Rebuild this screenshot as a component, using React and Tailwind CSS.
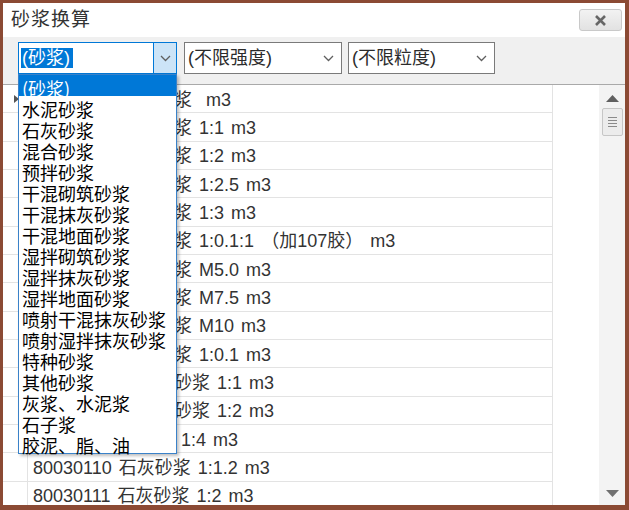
import React from 'react';

const rows = [
    '80030097 水泥砂浆  m3',
    '80030098 水泥砂浆 1:1 m3',
    '80030099 水泥砂浆 1:2 m3',
    '80030100 水泥砂浆 1:2.5 m3',
    '80030101 水泥砂浆 1:3 m3',
    '80030102 素水泥浆 1:0.1:1 （加107胶） m3',
    '80030103 混合砂浆 M5.0 m3',
    '80030104 混合砂浆 M7.5 m3',
    '80030105 混合砂浆 M10 m3',
    '80030106 石灰膏浆 1:0.1 m3',
    '80030107 水泥灰砂浆 1:1 m3',
    '80030108 水泥灰砂浆 1:2 m3',
    '80030109 石灰浆 1:4 m3',
    '80030110 石灰砂浆 1:1.2 m3',
    '80030111 石灰砂浆 1:2 m3',
];

const tipos = [
    '(砂浆)', '水泥砂浆', '石灰砂浆', '混合砂浆', '预拌砂浆', '干混砌筑砂浆', '干混抹灰砂浆',
    '干混地面砂浆', '湿拌砌筑砂浆', '湿拌抹灰砂浆', '湿拌地面砂浆', '喷射干混抹灰砂浆',
    '喷射湿拌抹灰砂浆', '特种砂浆', '其他砂浆', '灰浆、水泥浆', '石子浆', '胶泥、脂、油',
];

const Chevron = ({ className }) => (
    <svg width="11" height="7" viewBox="0 0 11 7" className={className}>
        <path d="M1 1 L5.5 5.5 L10 1" fill="none" stroke="#5f5f5f" strokeWidth="1.3" />
    </svg>
);

export default function App() {
    return (
        <div className="relative w-[629px] h-[510px] border-[3px] border-b-[5px] border-r-[4px] border-[#8b4a34] bg-white flex flex-col overflow-hidden font-['Liberation_Sans','Noto_Sans_CJK_SC',sans-serif] text-[#2b2b2b]">

            {/* --- TITULO --- */}
            <div className="h-[34px] flex items-center justify-between pl-[8px] pr-[3px]">
                <span className="text-[19px] tracking-[1px] text-[#333]">砂浆换算</span>
                <button className="w-[43px] h-[22px] rounded-[3px] border border-[#c9c9c9] bg-gradient-to-b from-[#f2f2f2] to-[#e2e2e2] flex items-center justify-center">
                    <svg width="13" height="11" viewBox="0 0 13 11">
                        <path d="M2 1 L11 10 M11 1 L2 10" stroke="#666" strokeWidth="2.6" />
                    </svg>
                </button>
            </div>

            {/* --- FILTROS --- */}
            <div className="h-[47px] bg-[#f0f0f0] flex items-start pt-[5px] pl-[15px] text-[18px]">
                <div className="w-[159px] h-[32px] border border-[#0078d7] bg-white flex">
                    <div className="flex-1 flex items-center pl-[2px]">
                        <span className="bg-[#0078d7] text-white leading-[20px] pl-[1px] pr-[3px]">(砂浆)</span>
                    </div>
                    <div className="w-[23px] bg-[#cce4f7] border-l border-[#0078d7] flex items-center justify-center">
                        <Chevron />
                    </div>
                </div>
                <div className="ml-[7px] w-[158px] h-[32px] border border-[#7a7a7a] bg-white flex items-center justify-between pl-[3px] pr-[7px]">
                    <span>(不限强度)</span>
                    <Chevron />
                </div>
                <div className="ml-[6px] w-[147px] h-[32px] border border-[#7a7a7a] bg-white flex items-center justify-between pl-[3px] pr-[7px]">
                    <span>(不限粒度)</span>
                    <Chevron />
                </div>
            </div>

            {/* --- GRILLA --- */}
            <div className="flex-1 border-t border-[#a9a9a9] flex overflow-hidden">
                <div className="w-[550px] flex flex-col">
                    {rows.map((texto, i) => (
                        <div key={i} className="h-[28.33px] shrink-0 flex border-b border-[#e3e3e3]">
                            <div className="w-[25px] shrink-0 border-r border-[#e3e3e3] flex items-center justify-center">
                                {i === 0 && (
                                    <svg width="5" height="8" viewBox="0 0 5 8" className="mr-[-2px]">
                                        <path d="M0 0 L5 4 L0 8 Z" fill="#555" />
                                    </svg>
                                )}
                            </div>
                            <div className="flex-1 border-r border-[#e3e3e3] flex items-center pt-[3px] pl-[5px] text-[18px] text-[#333] whitespace-pre [word-spacing:2px]">
                                {texto}
                            </div>
                        </div>
                    ))}
                </div>
                <div className="flex-1" />
                <div className="w-[26px] bg-[#f3f3f3] flex flex-col items-center">
                    <svg width="13" height="7" viewBox="0 0 13 7" className="mt-[10px]">
                        <path d="M0 7 L6.5 0 L13 7 Z" fill="#606060" />
                    </svg>
                    <div className="mt-[6px] w-[21px] h-[28px] rounded-[2px] border border-[#c6c6c6] bg-[#ececec] flex flex-col items-center justify-center gap-[2px]">
                        <div className="w-[9px] h-px bg-[#8a8a8a]" />
                        <div className="w-[9px] h-px bg-[#8a8a8a]" />
                        <div className="w-[9px] h-px bg-[#8a8a8a]" />
                        <div className="w-[9px] h-px bg-[#8a8a8a]" />
                    </div>
                    <div className="flex-1" />
                    <svg width="13" height="7" viewBox="0 0 13 7" className="mb-[8px]">
                        <path d="M0 0 L6.5 7 L13 0 Z" fill="#707070" />
                    </svg>
                </div>
            </div>

            {/* --- LISTA DESPLEGADA --- */}
            <div className="absolute left-[15px] top-[71px] w-[159px] border border-[#3a82c9] bg-white shadow-[2px_2px_3px_rgba(0,0,0,0.25)] font-['Noto_Sans_CJK_SC',sans-serif] text-[18px] text-black">
                {tipos.map((t, i) => (
                    <div
                        key={t}
                        className={`h-[21px] pt-[4px] pl-[3px] leading-[18px] whitespace-nowrap ${i === 0 ? 'bg-[#0078d7] text-white' : ''}`}
                    >
                        {t}
                    </div>
                ))}
            </div>
        </div>
    );
}
